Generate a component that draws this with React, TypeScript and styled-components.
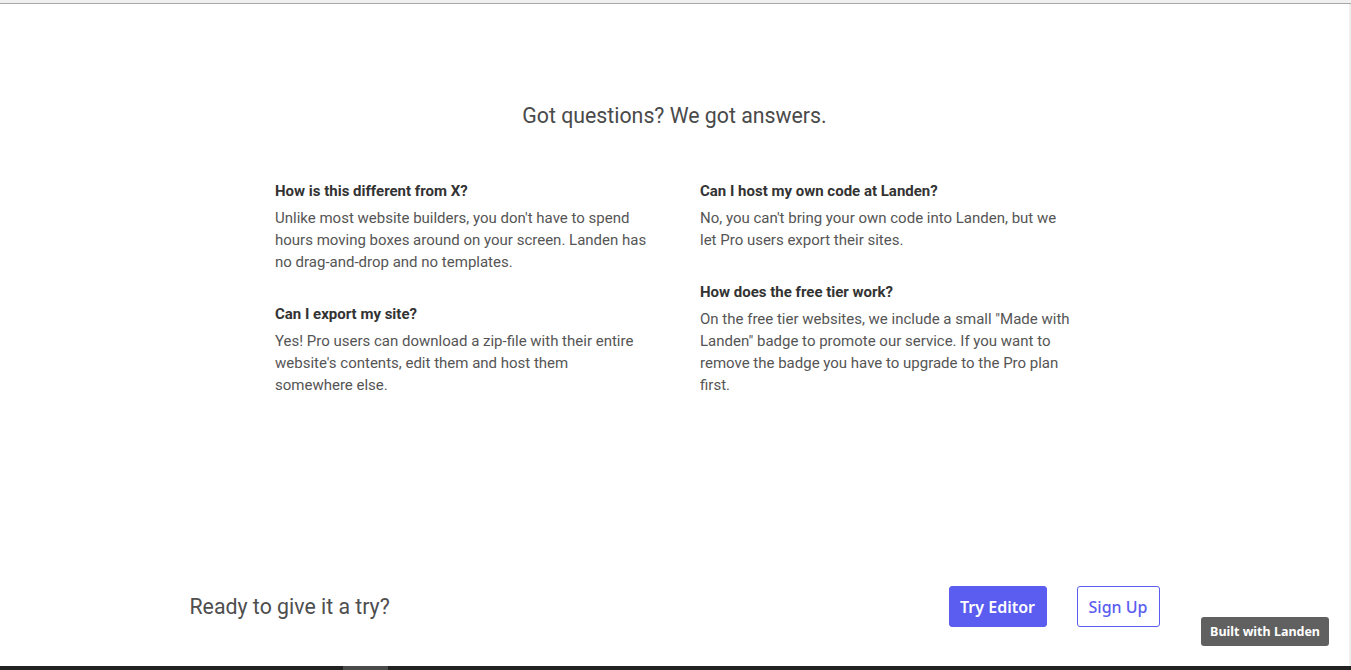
import * as React from 'react';
import styled, { createGlobalStyle } from 'styled-components';

const GlobalStyle = createGlobalStyle`
	html, body {
		margin: 0;
		padding: 0;
		background: #fff;
	}
	* {
		box-sizing: border-box;
	}
`;

const faqs = [
	[
		{
			q: 'How is this different from X?',
			a: "Unlike most website builders, you don't have to spend hours moving boxes around on your screen. Landen has no drag-and-drop and no templates.",
		},
		{
			q: 'Can I export my site?',
			a: "Yes! Pro users can download a zip-file with their entire website's contents, edit them and host them somewhere else.",
		},
	],
	[
		{
			q: 'Can I host my own code at Landen?',
			a: "No, you can't bring your own code into Landen, but we let Pro users export their sites.",
		},
		{
			q: 'How does the free tier work?',
			a: 'On the free tier websites, we include a small "Made with Landen" badge to promote our service. If you want to remove the badge you have to upgrade to the Pro plan first.',
		},
	],
];

export default function App() {
	return (
		<>
			<GlobalStyle />
			<Page>
				<TopBar />
				<Main>
					<Content>
						<Heading>Got questions? We got answers.</Heading>
						<FaqGrid>
							{faqs.map((col, i) => (
								<FaqColumn key={i}>
									{col.map(item => (
										<FaqItem key={item.q}>
											<Question>{item.q}</Question>
											<Answer>{item.a}</Answer>
										</FaqItem>
									))}
								</FaqColumn>
							))}
						</FaqGrid>

						<Footer>
							<CallToAction>Ready to give it a try?</CallToAction>
							<Buttons>
								<Button primary>Try Editor</Button>
								<Button>Sign Up</Button>
							</Buttons>
						</Footer>

						<Badge>Built with Landen</Badge>
					</Content>
					<Scrollbar />
				</Main>
				<BottomStrip>
					<StripSegment />
				</BottomStrip>
			</Page>
		</>
	);
}

const Page = styled.div`
	height: 670px;
	display: flex;
	flex-direction: column;
	overflow: hidden;
`;

const TopBar = styled.div`
	height: 4px;
	flex-shrink: 0;
	background: #f0f0f0;
	border-bottom: 1px solid #a8a8a8;
`;

const Main = styled.div`
	flex: 1;
	display: flex;
	min-height: 0;
`;

const Content = styled.div`
	flex: 1;
	position: relative;
	display: flex;
	flex-direction: column;
	padding: 99px 0 39px;
	font-family: Roboto, 'Liberation Sans', sans-serif;
`;

const Scrollbar = styled.div`
	width: 2px;
	background: #efefef;
`;

const Heading = styled.h2`
	margin: 0;
	text-align: center;
	font-size: 21.3px;
	line-height: 26px;
	font-weight: 400;
	color: #4a4a4a;
`;

const FaqGrid = styled.div`
	display: grid;
	grid-template-columns: 373px 374px;
	column-gap: 52px;
	justify-content: center;
	margin-top: 52px;
`;

const FaqColumn = styled.div`
	display: flex;
	flex-direction: column;
	gap: 31px;
`;

const FaqItem = styled.div``;

const Question = styled.h4`
	margin: 0 0 6px;
	font-size: 15px;
	line-height: 20px;
	font-weight: 700;
	color: #333;
`;

const Answer = styled.p`
	margin: 0;
	font-size: 15px;
	line-height: 22px;
	color: #555;
`;

const Footer = styled.div`
	margin: auto auto 0;
	width: 970px;
	display: flex;
	align-items: center;
	justify-content: space-between;
`;

const CallToAction = styled.p`
	margin: 0;
	font-size: 21.3px;
	color: #4e4e4e;
`;

const Buttons = styled.div`
	display: flex;
	gap: 30px;
`;

const Button = styled.button<{ primary?: boolean }>`
	height: 41px;
	padding: 0 ${props => props.primary ? '10.5px' : '11px'};
	border-radius: 3px;
	border: 1px solid #5a5df0;
	background: ${props => props.primary ? '#5a5df0' : '#fff'};
	color: ${props => props.primary ? '#fff' : '#5a5df0'};
	font-family: 'Noto Sans', 'Open Sans', sans-serif;
	font-size: 16px;
	font-weight: ${props => props.primary ? 600 : 500};
	cursor: pointer;
`;

const Badge = styled.div`
	position: absolute;
	right: 20px;
	bottom: 20px;
	height: 29px;
	padding: 0 9px;
	display: flex;
	align-items: center;
	border-radius: 3px;
	background: #606060;
	color: #fff;
	font-family: 'Noto Sans', 'Open Sans', sans-serif;
	font-size: 12.5px;
	font-weight: 700;
`;

const BottomStrip = styled.div`
	height: 4px;
	flex-shrink: 0;
	background: #222;
	position: relative;
`;

const StripSegment = styled.div`
	margin-left: 343px;
	width: 45px;
	height: 100%;
	background: #4a4a4a;
`;
